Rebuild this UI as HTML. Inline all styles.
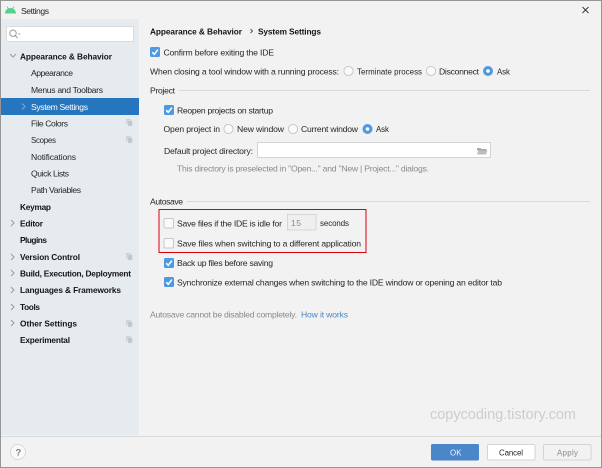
<!DOCTYPE html>
<html><head><meta charset="utf-8"><style>
html,body{margin:0;padding:0;background:#f2f2f2}
svg{display:block;filter:blur(.25px)}
text{font-family:"Liberation Sans",sans-serif;font-size:8.6px;fill:#262626}
.b{font-weight:bold;fill:#141414;font-size:8.3px}
.g{fill:#8a8a8a}
text.n{font-size:7.9px}
.s{stroke:#9a9a9a;stroke-width:1;fill:none}
</style></head><body>
<svg width="602" height="468" viewBox="0 0 602 468" xmlns="http://www.w3.org/2000/svg">
<defs>
<g id="cb"><rect x="0" y="0" width="10" height="10" rx="1.5" fill="#4f98e2"/><path d="M2.2 5.2L4.2 7.3L7.9 2.6" stroke="#fff" stroke-width="1.5" fill="none"/></g>
<g id="un"><rect x=".5" y=".5" width="9.500" height="9.500" rx="1.500" fill="#fafafa" stroke="#c8c8c8"/></g>
<g id="ro"><circle cx="5" cy="5" r="4.600" fill="#fafafa" stroke="#c4c4c4" stroke-width=".9"/></g>
<g id="ra"><circle cx="5" cy="5" r="5" fill="#4f98e2"/><circle cx="5" cy="5" r="1.800" fill="#fff"/></g>
<g id="cp"><rect x="0" y="0" width="4.600" height="5.200" fill="#ccd2d7"/><rect x="1.800" y="1.800" width="4.600" height="5.200" fill="#bfc6cc" stroke="#dfe4e8" stroke-width=".5"/></g>
</defs>
<rect width="602" height="468" fill="#f2f2f2"/>
<rect x="1" y="19" width="138" height="416" fill="#e6ebf0"/>
<rect x="1" y="98" width="138" height="17" fill="#2675bf"/>
<rect x="1" y="436" width="600" height="1" fill="#d9d9d9"/>
<rect x=".5" y=".5" width="601" height="467" fill="none" stroke="#969696"/>

<path d="M5 13.500a5.500 5.500 0 0 1 11 0z" fill="#55d18d"/>
<path d="M7 6.500L8.200 8.500M14 6.500L12.800 8.500" stroke="#55d18d" stroke-width=".8"/>
<text x="21" y="14" textLength="28" lengthAdjust="spacing">Settings</text>
<path d="M582.500 7L588.500 13M588.500 7L582.500 13" stroke="#333" stroke-width=".9" fill="none"/>

<rect x="6.500" y="26.500" width="127" height="15" rx="1" fill="#fff" stroke="#d8dcdf"/>
<circle cx="13" cy="33.200" r="3.200" fill="none" stroke="#9a9a9a"/><path d="M15.300 35.600L17.600 38" stroke="#9a9a9a"/><path d="M18 33.500h2.600l-1.300 1.500z" fill="#9a9a9a"/>

<path class="s" d="M10 54L13 57L16 54"/>
<path d="M22 103.500L25 106.500L22 109.500" stroke="#7fa8d4" fill="none"/>
<path class="s" d="M11 220L14 223L11 226"/>
<path class="s" d="M11 254L14 257L11 260"/>
<path class="s" d="M11 270L14 273L11 276"/>
<path class="s" d="M11 287L14 290L11 293"/>
<path class="s" d="M11 304L14 307L11 310"/>
<path class="s" d="M11 320L14 323L11 326"/>

<text class="b" x="20" y="59.500" textLength="92" lengthAdjust="spacing">Appearance &amp; Behavior</text>
<text x="31" y="76" textLength="42" lengthAdjust="spacing">Appearance</text>
<text x="31" y="93" textLength="72" lengthAdjust="spacing">Menus and Toolbars</text>
<text x="31" y="110" textLength="57" lengthAdjust="spacing" style="fill:#fff">System Settings</text>
<text x="31" y="126.500" textLength="37" lengthAdjust="spacing">File Colors</text>
<text class="n" x="31" y="143" textLength="25" lengthAdjust="spacing">Scopes</text>
<text x="31" y="160" textLength="45" lengthAdjust="spacing">Notifications</text>
<text x="31" y="176.500" textLength="38" lengthAdjust="spacing">Quick Lists</text>
<text x="31" y="193" textLength="50" lengthAdjust="spacing">Path Variables</text>
<text class="b" x="20" y="210" textLength="31" lengthAdjust="spacing">Keymap</text>
<text class="b" x="20" y="226.500" textLength="23" lengthAdjust="spacing">Editor</text>
<text class="b" x="20" y="243" textLength="27" lengthAdjust="spacing">Plugins</text>
<text class="b" x="20" y="260" textLength="60" lengthAdjust="spacing">Version Control</text>
<text class="b" x="20" y="276.500" textLength="111" lengthAdjust="spacing">Build, Execution, Deployment</text>
<text class="b" x="20" y="293" textLength="101" lengthAdjust="spacing">Languages &amp; Frameworks</text>
<text class="b" x="20" y="310" textLength="20" lengthAdjust="spacing">Tools</text>
<text class="b" x="20" y="326.500" textLength="57" lengthAdjust="spacing">Other Settings</text>
<text class="b" x="20" y="343" textLength="50" lengthAdjust="spacing">Experimental</text>
<use href="#cp" x="126" y="119"/><use href="#cp" x="126" y="136"/><use href="#cp" x="126" y="253"/><use href="#cp" x="126" y="320"/><use href="#cp" x="126" y="336"/>

<text class="b" x="150" y="34.500" textLength="92" lengthAdjust="spacing">Appearance &amp; Behavior</text>
<path d="M250.500 29L252.500 31L250.500 33" stroke="#555" fill="none"/>
<text class="b" x="258" y="34.500" textLength="63" lengthAdjust="spacing">System Settings</text>

<use href="#cb" x="150" y="47"/>
<text x="163.500" y="55.500" textLength="110.500" lengthAdjust="spacing">Confirm before exiting the IDE</text>
<text x="150" y="74.500" textLength="189" lengthAdjust="spacing">When closing a tool window with a running process:</text>
<use href="#ro" x="343.500" y="66"/>
<text class="n" x="357" y="74.500" textLength="65" lengthAdjust="spacing">Terminate process</text>
<use href="#ro" x="426" y="66"/>
<text x="439" y="74.500" textLength="40" lengthAdjust="spacing">Disconnect</text>
<use href="#ra" x="483" y="66"/>
<text class="n" x="497" y="74.500" textLength="13" lengthAdjust="spacing">Ask</text>

<text x="150" y="93.500" textLength="25" lengthAdjust="spacing">Project</text>
<rect x="179" y="90" width="411" height="1" fill="#d9d9d9"/>
<use href="#cb" x="164" y="105"/>
<text x="177" y="113.500" textLength="96" lengthAdjust="spacing">Reopen projects on startup</text>
<text x="163.500" y="132" textLength="56.500" lengthAdjust="spacing">Open project in</text>
<use href="#ro" x="223.500" y="124"/>
<text x="237" y="132" textLength="47" lengthAdjust="spacing">New window</text>
<use href="#ro" x="288" y="124"/>
<text x="301" y="132" textLength="57" lengthAdjust="spacing">Current window</text>
<use href="#ra" x="362.500" y="124"/>
<text class="n" x="376" y="132" textLength="13" lengthAdjust="spacing">Ask</text>
<text x="164" y="154" textLength="89" lengthAdjust="spacing">Default project directory:</text>
<rect x="257.500" y="142.500" width="233" height="15" fill="#fff" stroke="#d4d4d4"/>
<path d="M477 148h3.500l1 1h5v1.500h-9.500z" fill="#a9a9a9"/><path d="M477 154.500l1.500-4h9l-1.500 4z" fill="#bdbdbd"/>
<text class="g" x="177" y="171.500" textLength="252" lengthAdjust="spacing">This directory is preselected in "Open..." and "New | Project..." dialogs.</text>

<text x="150" y="204.500" textLength="33" lengthAdjust="spacing">Autosave</text>
<rect x="187" y="201" width="403" height="1" fill="#d9d9d9"/>
<rect x="159" y="209.500" width="207" height="43" fill="none" stroke="#d8000c" stroke-width="1"/>
<use href="#un" x="163.500" y="218"/>
<text x="177" y="226.500" textLength="105" lengthAdjust="spacing">Save files if the IDE is idle for</text>
<rect x="287.500" y="214.500" width="28.500" height="15.500" fill="#efefef" stroke="#d6d6d6"/>
<text class="g" x="291" y="226" textLength="10" lengthAdjust="spacing">15</text>
<text class="n" x="320" y="226" textLength="29" lengthAdjust="spacing">seconds</text>
<use href="#un" x="163.500" y="238"/>
<text x="177" y="246.500" textLength="184" lengthAdjust="spacing">Save files when switching to a different application</text>
<use href="#cb" x="164" y="258"/>
<text x="177" y="266" textLength="96" lengthAdjust="spacing">Back up files before saving</text>
<use href="#cb" x="164" y="277"/>
<text x="177" y="285.500" textLength="325" lengthAdjust="spacing">Synchronize external changes when switching to the IDE window or opening an editor tab</text>
<text class="g" x="150" y="317.500" textLength="147" lengthAdjust="spacing">Autosave cannot be disabled completely.</text>
<text x="301" y="317.500" textLength="47" lengthAdjust="spacing" style="fill:#4a86c5">How it works</text>

<text x="430" y="419" textLength="146" lengthAdjust="spacing" style="font-size:14.500px;fill:#cdcdcd">copycoding.tistory.com</text>

<circle cx="18" cy="452" r="7.500" fill="#fafafa" stroke="#d8d8d8"/>
<text x="15.500" y="455.500" style="font-size:9.500px;font-weight:bold;fill:#7a7a7a">?</text>
<rect x="431" y="444" width="48" height="16.500" rx="1.500" fill="#4a87c9"/>
<text class="n" x="450" y="455.500" textLength="11.500" lengthAdjust="spacing" style="fill:#eef4fa">OK</text>
<rect x="487.500" y="444.500" width="47.500" height="15.500" rx="1.500" fill="#fff" stroke="#d4d4d4"/>
<text class="n" x="499" y="455.500" textLength="24" lengthAdjust="spacing">Cancel</text>
<rect x="543.500" y="444.500" width="47.500" height="15.500" rx="1.500" fill="#f2f2f2" stroke="#d4d4d4"/>
<text class="g n" x="557" y="455.500" textLength="21" lengthAdjust="spacing">Apply</text>
</svg>
</body></html>
